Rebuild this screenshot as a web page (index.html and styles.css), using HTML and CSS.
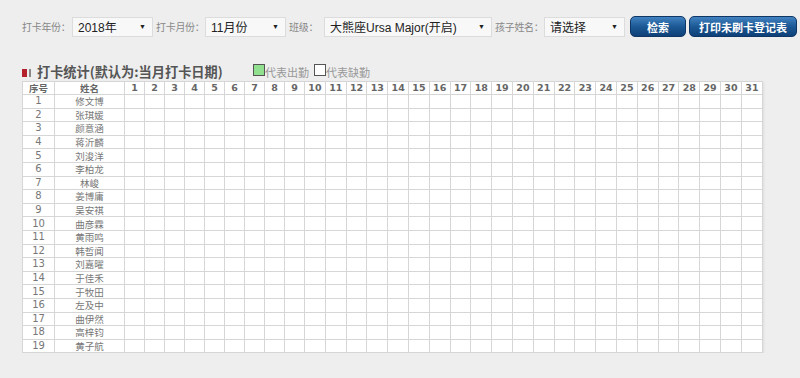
FILE: index.html
```html
<!DOCTYPE html>
<html lang="zh">
<head>
  <meta charset="UTF-8">
  <title>打卡统计</title>
  <link rel="stylesheet" href="styles.css">
</head>
<body>
  <div class="toolbar">
    <label class="lbl l-year">打卡年份：</label>
    <div class="sel w-year"><span>2018年</span><i>▼</i></div>
    <label class="lbl l-month">打卡月份：</label>
    <div class="sel w-month"><span>11月份</span><i>▼</i></div>
    <label class="lbl l-class">班级：</label>
    <div class="sel w-class"><span>大熊座Ursa Major(开启)</span><i>▼</i></div>
    <label class="lbl l-kid">孩子姓名：</label>
    <div class="sel w-kid"><span>请选择</span><i>▼</i></div>
    <button class="btn btn-search">检索</button>
    <button class="btn btn-print">打印未刷卡登记表</button>
  </div>

  <div class="title-row">
    <span class="mark"><b class="red"></b><b class="gray"></b></span>
    <h2 class="title">打卡统计(默认为:当月打卡日期)</h2>
    <span class="legend"><i class="box green"></i>代表出勤</span>
    <span class="legend"><i class="box white"></i>代表缺勤</span>
  </div>

  <table class="grid" id="grid">
    <thead>
      <tr id="headRow">
        <th class="c-no">序号</th>
        <th class="c-name">姓名</th>
      </tr>
    </thead>
    <tbody id="body"></tbody>
  </table>

  <script>
    var names = ["修文博","张琪媛","颜意涵","蒋沂麟","刘浚洋","李柏龙","林峻","姜博庸","吴安祺","曲彦霖",
                 "黄雨鸣","韩哲闻","刘嘉曜","于佳禾","于牧田","左及中","曲伊然","高梓钧","黄子航"];
    var head = document.getElementById("headRow");
    for (var d = 1; d <= 31; d++) {
      var th = document.createElement("th");
      th.className = d < 10 ? "c-day" : "c-day2";
      th.textContent = d;
      head.appendChild(th);
    }
    var body = document.getElementById("body");
    names.forEach(function (n, i) {
      var tr = document.createElement("tr");
      var html = '<td class="num">' + (i + 1) + '</td><td class="name">' + n + '</td>';
      for (var d = 1; d <= 31; d++) html += "<td></td>";
      tr.innerHTML = html;
      body.appendChild(tr);
    });
  </script>
</body>
</html>
```

FILE: styles.css
```css
body {
  margin: 0;
  background: #eeeeee;
  font-family: "Noto Sans CJK SC", "DejaVu Sans", sans-serif;
  color: #777;
}
.toolbar {
  display: flex;
  align-items: center;
  padding: 16px 0 0 22px;
  height: 21px;
}
.lbl {
  flex: none;
  font-size: 10px;
  letter-spacing: -0.3px;
  color: #888;
  margin-right: 2px;
  white-space: nowrap;
}
.l-year { width: 48px; }
.l-month { width: 47px; }
.l-class { width: 33px; }
.l-kid { width: 47px; }
.sel {
  flex: none;
  box-sizing: border-box;
  height: 20px;
  background: #f8f8f8;
  border: 1px solid #dcdcdc;
  display: flex;
  align-items: center;
  justify-content: space-between;
  padding: 0 6px 0 5px;
  margin-right: 3px;
  font-family: "Liberation Sans", "Noto Sans CJK SC", sans-serif;
  font-size: 12px;
  color: #222;
}
.sel i {
  font-style: normal;
  font-size: 7px;
  color: #222;
}
.w-year { width: 81px; }
.w-month { width: 81px; }
.w-class { width: 168px; }
.w-kid { width: 81px; }
.btn {
  flex: none;
  height: 21px;
  border: 1px solid #0e3766;
  border-radius: 5px;
  background: linear-gradient(#4282c0, #1c5995 50%, #0f4078);
  color: #fff;
  font-family: "Noto Sans CJK SC", sans-serif;
  font-weight: bold;
  font-size: 11px;
  padding: 0;
  margin-left: 3px;
}
.btn-search { width: 56px; margin-left: 2px; }
.btn-print { width: 108px; }
.title-row {
  display: flex;
  align-items: center;
  margin: 26px 0 0 22px;
  height: 16px;
}
.mark {
  display: flex;
  gap: 2px;
  margin-right: 6px;
  margin-top: 3px;
}
.mark b { display: block; height: 8px; }
.mark .red { width: 5px; background: #b3222a; }
.mark .gray { width: 2px; background: #888; }
.title {
  flex: none;
  width: 216px;
  margin: 0;
  font-size: 13.2px;
  font-weight: bold;
  color: #555;
  white-space: nowrap;
}
.legend {
  display: flex;
  align-items: center;
  font-size: 11px;
  color: #999;
  margin-right: 5px;
  margin-top: 2px;
}
.box {
  box-sizing: border-box;
  width: 12px;
  height: 12px;
  border: 1px solid #555;
  margin-top: -5px;
}
.box.green { background: #90e090; }
.box.white { background: #fff; }
.grid {
  margin: 2px 0 0 22px;
  border-collapse: collapse;
  background: #fff;
  box-shadow: 1px 1px 2px #ddd;
  table-layout: fixed;
  width: 741px;
}
.grid th, .grid td {
  box-sizing: border-box;
  border: 1px solid #d6d6d6;
  padding: 0;
  height: 13.6px;
  line-height: 12px;
  text-align: center;
  overflow: hidden;
  white-space: nowrap;
}
.grid th {
  font-family: "DejaVu Sans", "Noto Sans CJK SC", sans-serif;
  font-weight: bold;
  font-size: 9.5px;
  color: #666;
  height: 13px;
}
.grid th.c-no, .grid th.c-name {
  font-family: "Noto Sans CJK SC", sans-serif;
  font-size: 9.5px;
}
.c-no { width: 32px; }
.c-name { width: 70px; }
.c-day { width: 20px; }
.c-day2 { width: 20.8px; }
.grid td.num {
  font-family: "DejaVu Sans", sans-serif;
  font-size: 10px;
  color: #777;
}
.grid td.name {
  font-size: 9.5px;
  color: #777;
}
```
